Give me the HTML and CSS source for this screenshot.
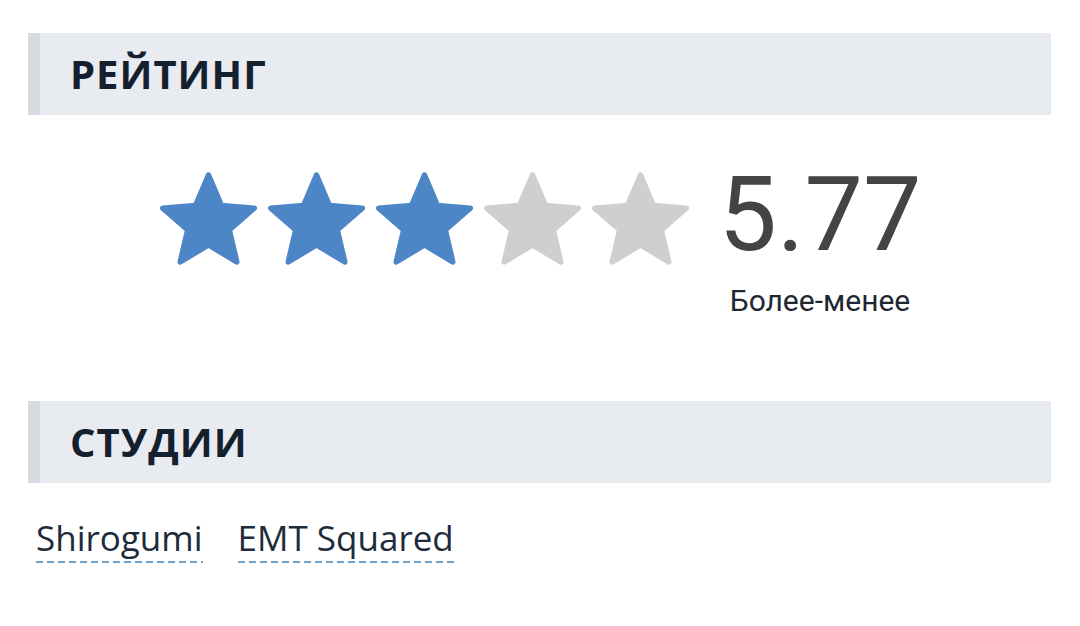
FILE: index.html
```html
<!DOCTYPE html>
<html lang="ru">
<head>
<meta charset="utf-8">
<link rel="stylesheet" href="styles.css">
</head>
<body>
<div class="page">
  <div class="section-head"><h2>РЕЙТИНГ</h2></div>
  <div class="rating">
    <div class="stars">
      <svg class="star on" viewBox="1.4 1.4 21.2 20.2"><path d="M12 17.27L18.18 21l-1.64-7.03L22 9.24l-7.19-.61L12 2 9.19 8.63 2 9.24l5.46 4.73L5.82 21z"/></svg>
      <svg class="star on" viewBox="1.4 1.4 21.2 20.2"><path d="M12 17.27L18.18 21l-1.64-7.03L22 9.24l-7.19-.61L12 2 9.19 8.63 2 9.24l5.46 4.73L5.82 21z"/></svg>
      <svg class="star on" viewBox="1.4 1.4 21.2 20.2"><path d="M12 17.27L18.18 21l-1.64-7.03L22 9.24l-7.19-.61L12 2 9.19 8.63 2 9.24l5.46 4.73L5.82 21z"/></svg>
      <svg class="star off" viewBox="1.4 1.4 21.2 20.2"><path d="M12 17.27L18.18 21l-1.64-7.03L22 9.24l-7.19-.61L12 2 9.19 8.63 2 9.24l5.46 4.73L5.82 21z"/></svg>
      <svg class="star off" viewBox="1.4 1.4 21.2 20.2"><path d="M12 17.27L18.18 21l-1.64-7.03L22 9.24l-7.19-.61L12 2 9.19 8.63 2 9.24l5.46 4.73L5.82 21z"/></svg>
    </div>
    <div class="score">
      <div class="value">5.77</div>
      <div class="label">Более-менее</div>
    </div>
  </div>
  <div class="section-head"><h2>СТУДИИ</h2></div>
  <div class="studios">
    <a class="studio" href="#">Shirogumi</a>
    <a class="studio" href="#">EMT Squared</a>
  </div>
</div>
</body>
</html>
```
FILE: styles.css
```css
html, body {
  margin: 0;
  padding: 0;
  background: #ffffff;
}
.page {
  padding: 33px 29px 0 28px;
}
.section-head {
  background: #e8ebf0;
  border-left: 12px solid #d5dae1;
  height: 82px;
  display: flex;
  align-items: center;
  padding-left: 30px;
}
.section-head h2 {
  margin: 0;
  font-family: "Open Sans", sans-serif;
  font-weight: 700;
  font-size: 40px;
  letter-spacing: 1px;
  color: #14202e;
  line-height: 1;
}
.rating {
  display: flex;
  justify-content: center;
  align-items: flex-start;
  padding-top: 57px;
  padding-left: 2px;
  height: 286px;
  box-sizing: border-box;
}
.stars {
  display: flex;
  gap: 11px;
}
.star {
  width: 97px;
  height: 93px;
}
.star path {
  stroke-width: 1.2;
  stroke-linejoin: round;
}
.star.on path { fill: #4d86c6; stroke: #4d86c6; }
.star.off path { fill: #cfcfcf; stroke: #cfcfcf; }
.score {
  margin-left: 30px;
  display: flex;
  flex-direction: column;
  align-items: center;
}
.value {
  font-family: Roboto, sans-serif;
  font-size: 104px;
  line-height: 1;
  color: #444444;
  margin-top: -9px;
}
.label {
  font-family: Roboto, sans-serif;
  font-size: 30px;
  color: #1f2732;
  margin-top: 19px;
  line-height: 1;
}
.studios {
  display: flex;
  gap: 35px;
  padding: 34px 0 0 8px;
}
.studio {
  font-family: "Open Sans", sans-serif;
  font-size: 35px;
  color: #1d2b3a;
  text-decoration: none;
  line-height: 42px;
  padding-bottom: 4px;
  background-image: linear-gradient(to right, #6fa3cb 0, #6fa3cb 7px, transparent 7px);
  background-size: 11px 2px;
  background-repeat: repeat-x;
  background-position: 0 100%;
}
```
